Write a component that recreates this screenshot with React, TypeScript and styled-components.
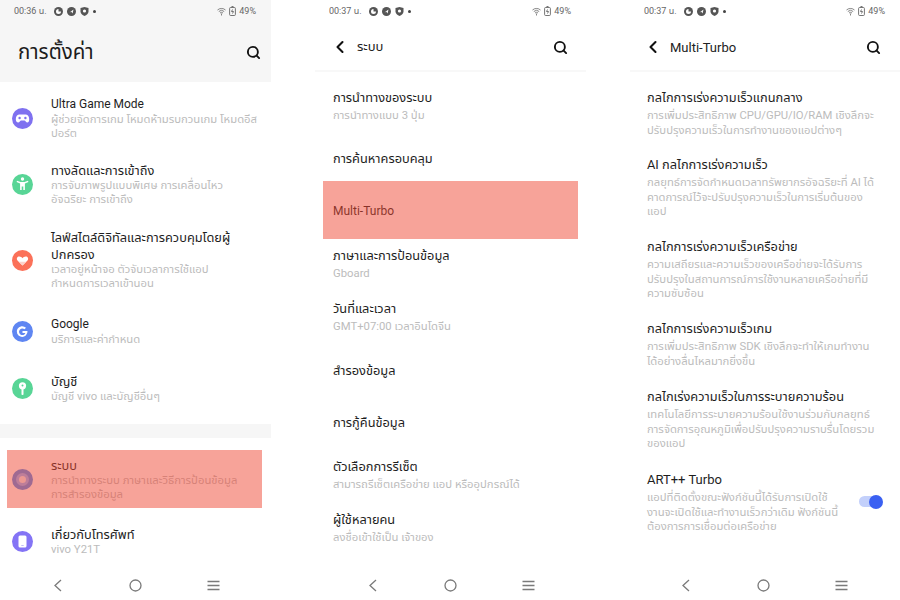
import * as React from 'react';
import styled, { createGlobalStyle } from 'styled-components';
import { ChevronLeft, Search } from 'lucide-react';

const GlobalStyle = createGlobalStyle`
    html, body {
        margin: 0;
        background: #fff;
        font-family: Roboto, "Noto Sans", "Noto Sans Thai", "DejaVu Sans", sans-serif;
    }
`;

const Page = styled.div`
    display: grid;
    grid-template-columns: 271px 271px 270px;
    column-gap: 44px;
    width: 900px;
    height: 600px;
    overflow: hidden;
`;

const Phone = styled.div`
    position: relative;
    height: 600px;
    display: flex;
    flex-direction: column;
`;

const Top = styled.div`
    background: #f6f6f6;
    height: 82px;
    flex: none;
`;

const Status = styled.div`
    display: flex;
    align-items: center;
    height: 22px;
    padding: 0 15px 0 14px;
    color: #666;
    font-size: 9px;
`;

const StatusIcons = styled.div`
    display: flex;
    align-items: center;
    gap: 4px;
    margin-left: 7px;
    flex: 1;
`;

const StatusRight = styled.div`
    display: flex;
    align-items: center;
    gap: 3px;
`;

const BigTitle = styled.div`
    display: flex;
    align-items: center;
    justify-content: space-between;
    height: 30px;
    margin-top: 15px;
    padding: 0 10px 0 18px;
    font-size: 20.5px;
    color: #1c1c1c;
`;

const SubHeader = styled.div<{ $left: number; $right: number }>`
    display: flex;
    align-items: center;
    height: 46px;
    padding: 2px ${p => p.$right}px 0 ${p => p.$left}px;
    border-bottom: 2px solid #f8f8f8;
    font-size: 13px;
    color: #222;
    flex: none;
`;

const HeaderText = styled.span`
    margin-left: 7px;
    flex: 1;
`;

const Band = styled.div<{ $gap: number }>`
    background: #f6f6f6;
    height: 14px;
    margin-top: ${p => p.$gap}px;
    flex: none;
`;

const Row = styled.div<{ $gap: number; $left: number }>`
    display: flex;
    align-items: center;
    margin-top: ${p => p.$gap}px;
    padding-left: ${p => p.$left}px;
    padding-right: 14px;
    flex: none;
`;

const IconCell = styled.div`
    width: 21px;
    height: 21px;
    flex: none;
    margin-right: 18px;
`;

const Texts = styled.div`
    flex: 1;
    min-width: 0;
`;

const Title = styled.div<{ $size: number; $line: number }>`
    font-size: ${p => p.$size}px;
    line-height: ${p => p.$line}px;
    color: #1e1e1e;
    white-space: pre;
`;

const Sub = styled.div`
    font-size: 11.3px;
    line-height: 14.5px;
    color: #bcbcbc;
    white-space: pre;
`;

const Toggle = styled.div`
    position: relative;
    width: 22px;
    height: 11px;
    border-radius: 6px;
    background: #c3d0fb;
    flex: none;
    margin-right: 5px;
    &::after {
        content: '';
        position: absolute;
        right: -2px;
        top: -1.5px;
        width: 14px;
        height: 14px;
        border-radius: 50%;
        background: #3a60f2;
    }
`;

const Highlight = styled.div<{ $x: number; $y: number }>`
    position: absolute;
    left: ${p => p.$x}px;
    top: ${p => p.$y}px;
    width: 255px;
    height: 58px;
    background: rgba(239, 71, 51, 0.5);
`;

const Nav = styled.div<{ $left: number }>`
    position: absolute;
    left: 0;
    right: 0;
    top: 576px;
    height: 18px;
    display: grid;
    grid-template-columns: 78px 77px 78px;
    padding-left: ${p => p.$left}px;
    justify-items: center;
    align-items: center;
`;

const StatusBar: React.FC<{ time: string }> = ({ time }) => (
    <Status>
        <span>{time}</span>
        <StatusIcons>
            <svg width="9" height="9" viewBox="0 0 9 9"><circle cx="4.5" cy="4.5" r="4.5" fill="#555" /><path d="M4.5 2a2.5 2.5 0 1 0 2.5 2.5H4.5z" fill="#fff" /></svg>
            <svg width="9" height="9" viewBox="0 0 9 9"><circle cx="4.5" cy="4.5" r="4.5" fill="#555" /><path d="M2.5 5.5 6.5 2.5 5.5 6.5 4.4 4.8z" fill="#fff" /></svg>
            <svg width="9" height="9" viewBox="0 0 9 9"><path d="M.5 1 4.5 0l4 1v3.500c0 2-2 3.700-4 4.500-2-.8-4-2.500-4-4.500z" fill="#555" /><circle cx="4.5" cy="4" r="1.600" fill="#fff" /></svg>
            <svg width="3" height="3" viewBox="0 0 3 3"><circle cx="1.5" cy="1.5" r="1.5" fill="#444" /></svg>
        </StatusIcons>
        <StatusRight>
            <svg width="9" height="9" viewBox="0 0 9 9" fill="none" stroke="#666" strokeWidth=".8"><path d="M.5 3a6 6 0 0 1 8 0M1.800 4.500a4 4 0 0 1 5.400 0M3 6a2.200 2.200 0 0 1 3 0" /><path d="M4.500 6.500v2" /></svg>
            <svg width="7" height="10" viewBox="0 0 7 10" fill="none" stroke="#666" strokeWidth=".9"><rect x=".6" y="1.5" width="5.800" height="8" rx="1" /><path d="M2.500.5h2M3.500 3.500 2.500 5.500h2L3.500 7.500" /></svg>
            <span>49%</span>
        </StatusRight>
    </Status>
);

const Dot: React.FC<{ color: string; children: React.ReactNode }> = ({ color, children }) => (
    <svg width="21" height="21" viewBox="0 0 21 21">
        <circle cx="10.5" cy="10.5" r="10.5" fill={color} />
        {children}
    </svg>
);

const icons: Record<string, React.ReactNode> = {
    game: (
        <Dot color="#7f71f0">
            <path d="M7 6.500h7c2 0 3.200 2.500 3.200 4.800 0 2.200-.8 3.200-1.800 3.200-1.500 0-2-2-3-2H9.100c-1 0-1.500 2-3 2-1 0-2.300-1-2.300-3.200 0-2.300 1.200-4.800 3.200-4.800z" fill="#fff" />
            <circle cx="7.600" cy="10" r="1.200" fill="#7f71f0" />
            <circle cx="13.400" cy="10" r="1.200" fill="#7f71f0" />
        </Dot>
    ),
    access: (
        <Dot color="#58d596">
            <circle cx="10.5" cy="5" r="1.700" fill="#fff" />
            <path d="M5 6.800 8.500 8h4L16 6.800l.4 1.300-3.500 1.400V16h-1.600v-3.500h-1.600V16H8.100V9.500L4.600 8.100z" fill="#fff" />
        </Dot>
    ),
    heart: (
        <Dot color="#fb7159">
            <path d="M10.500 15.500 5.500 10.500c-1.500-1.800-.2-4 1.800-4 1.300 0 2.500.8 3.200 1.800.7-1 1.900-1.800 3.200-1.800 2 0 3.300 2.200 1.800 4z" fill="#fff" />
            <path d="M10.500 15.500 6.800 11.800h7.400z" fill="#fcd2ca" />
        </Dot>
    ),
    google: (
        <Dot color="#5f86f2">
            <path d="M15.500 10h-5v2h2.900a3.300 3.300 0 1 1-.9-3.700l1.500-1.500a5.400 5.400 0 1 0 1.500 3.200z" fill="#fff" />
        </Dot>
    ),
    key: (
        <Dot color="#58d596">
            <circle cx="10.5" cy="7.800" r="3.600" fill="#fff" />
            <rect x="9.500" y="10" width="2" height="7" rx=".8" fill="#fff" />
            <circle cx="10.5" cy="7.500" r="1" fill="#58d596" />
        </Dot>
    ),
    system: (
        <Dot color="#4f8cf0">
            <circle cx="10.5" cy="10.5" r="6.500" fill="#8cb4ff" />
            <circle cx="10.5" cy="10.5" r="3.500" fill="#e8e8f0" />
        </Dot>
    ),
    phone: (
        <Dot color="#8474f5">
            <rect x="6.500" y="4.500" width="8" height="12" rx="1.500" fill="#fff" />
            <rect x="9.300" y="14" width="2.400" height=".8" fill="#b5adf6" />
        </Dot>
    ),
};

const NavIcons = () => (
    <>
        <svg width="10" height="13" viewBox="0 0 10 13" fill="none" stroke="#7a7a7a" strokeWidth="1.3"><path d="M8 1 2 6.500 8 12" /></svg>
        <svg width="13" height="13" viewBox="0 0 13 13" fill="none" stroke="#7a7a7a" strokeWidth="1.3"><circle cx="6.5" cy="6.5" r="5.5" /></svg>
        <svg width="13" height="11" viewBox="0 0 13 11" fill="none" stroke="#7a7a7a" strokeWidth="1.3"><path d="M.5 1.500h12M.5 5.500h12M.5 9.500h12" /></svg>
    </>
);

type Item = { title?: string; sub?: string; icon?: string; gap: number; band?: boolean; size?: number };

const settings: Item[] = [
    { icon: 'game', gap: 13.5, size: 12, title: 'Ultra Game Mode', sub: 'ผู้ช่วยจัดการเกม โหมดห้ามรบกวนเกม โหมดอีส\nปอร์ต' },
    { icon: 'access', gap: 20, title: 'ทางลัดและการเข้าถึง', sub: 'การจับภาพรูปแบบพิเศษ การเคลื่อนไหว\nอัจฉริยะ การเข้าถึง' },
    { icon: 'heart', gap: 21, title: 'ไลฟ์สไตล์ดิจิทัลและการควบคุมโดยผู้\nปกครอง', sub: 'เวลาอยู่หน้าจอ ตัวจับเวลาการใช้แอป\nกำหนดการเวลาเข้านอน' },
    { icon: 'google', gap: 24.5, size: 12, title: 'Google', sub: 'บริการและค่ากำหนด' },
    { icon: 'key', gap: 25.5, title: 'บัญชี', sub: 'บัญชี vivo และบัญชีอื่นๆ' },
    { band: true, gap: 19 },
    { icon: 'system', gap: 19, title: 'ระบบ', sub: 'การนำทางระบบ ภาษาและวิธีการป้อนข้อมูล\nการสำรองข้อมูล' },
    { icon: 'phone', gap: 23.5, title: 'เกี่ยวกับโทรศัพท์', sub: 'vivo Y21T' },
];

const system: Item[] = [
    { gap: 15, title: 'การนำทางของระบบ', sub: 'การนำทางแบบ 3 ปุ่ม' },
    { gap: 24, title: 'การค้นหาครอบคลุม' },
    { gap: 30.5, size: 12, title: 'Multi-Turbo' },
    { gap: 22.5, title: 'ภาษาและการป้อนข้อมูล', sub: 'Gboard' },
    { gap: 16.5, title: 'วันที่และเวลา', sub: 'GMT+07:00 เวลาอินโดจีน' },
    { gap: 25.5, title: 'สำรองข้อมูล' },
    { gap: 30, title: 'การกู้คืนข้อมูล' },
    { gap: 22, title: 'ตัวเลือกการรีเซ็ต', sub: 'สามารถรีเซ็ตเครือข่าย แอป หรืออุปกรณ์ได้' },
    { gap: 16.5, title: 'ผู้ใช้หลายคน', sub: 'ลงชื่อเข้าใช้เป็น เจ้าของ' },
];

const turbo: Item[] = [
    { gap: 15, title: 'กลไกการเร่งความเร็วแกนกลาง', sub: 'การเพิ่มประสิทธิภาพ CPU/GPU/IO/RAM เชิงลึกจะ\nปรับปรุงความเร็วในการทำงานของแอปต่างๆ' },
    { gap: 16, title: 'AI กลไกการเร่งความเร็ว', sub: 'กลยุทธ์การจัดกำหนดเวลาทรัพยากรอัจฉริยะที่ AI ได้\nคาดการณ์ไว้จะปรับปรุงความเร็วในการเริ่มต้นของ\nแอป' },
    { gap: 16.5, title: 'กลไกการเร่งความเร็วเครือข่าย', sub: 'ความเสถียรและความเร็วของเครือข่ายจะได้รับการ\nปรับปรุงในสถานการณ์การใช้งานหลายเครือข่ายที่มี\nความซับซ้อน' },
    { gap: 16.5, title: 'กลไกการเร่งความเร็วเกม', sub: 'การเพิ่มประสิทธิภาพ SDK เชิงลึกจะทำให้เกมทำงาน\nได้อย่างลื่นไหลมากยิ่งขึ้น' },
    { gap: 17, title: 'กลไกเร่งความเร็วในการระบายความร้อน', sub: 'เทคโนโลยีการระบายความร้อนใช้งานร่วมกับกลยุทธ์\nการจัดการอุณหภูมิเพื่อปรับปรุงความราบรื่นโดยรวม\nของแอป' },
    { gap: 17.5, size: 13, title: 'ART++ Turbo', sub: 'แอปที่ติดตั้งขณะฟังก์ชันนี้ได้รับการเปิดใช้\nงานจะเปิดใช้และทำงานเร็วกว่าเดิม ฟังก์ชันนี้\nต้องการการเชื่อมต่อเครือข่าย' },
];

const List: React.FC<{ items: Item[]; left: number; line: number; toggleLast?: boolean }> = ({ items, left, line, toggleLast }) => (
    <>
        {items.map((item, i) =>
            item.band ? (
                <Band key={i} $gap={item.gap} />
            ) : (
                <Row key={i} $gap={item.gap} $left={left}>
                    {item.icon && <IconCell>{icons[item.icon]}</IconCell>}
                    <Texts>
                        <Title $size={item.size ?? 12.8} $line={line}>{item.title}</Title>
                        {item.sub && <Sub>{item.sub}</Sub>}
                    </Texts>
                    {toggleLast && i === items.length - 1 && <Toggle />}
                </Row>
            )
        )}
    </>
);

const SubPage: React.FC<{ time: string; title: string; left: number; right: number; children: React.ReactNode }> = ({ time, title, left, right, children }) => (
    <Phone>
        <StatusBar time={time} />
        <SubHeader $left={left} $right={right}>
            <ChevronLeft size={20} strokeWidth={2.5} color="#111" />
            <HeaderText>{title}</HeaderText>
            <Search size={15} strokeWidth={3} color="#111" />
        </SubHeader>
        {children}
    </Phone>
);

const App: React.FC = () => (
    <Page>
        <GlobalStyle />
        <Phone>
            <Top>
                <StatusBar time="00:36 น." />
                <BigTitle>
                    <span>การตั้งค่า</span>
                    <Search size={15} strokeWidth={3} color="#111" />
                </BigTitle>
            </Top>
            <List items={settings} left={12} line={17} />
            <Highlight $x={7} $y={450} />
            <Nav $left={19}><NavIcons /></Nav>
        </Phone>
        <SubPage time="00:37 น." title="ระบบ" left={15} right={18}>
            <List items={system} left={18} line={22} />
            <Highlight $x={8} $y={181} />
            <Nav $left={19}><NavIcons /></Nav>
        </SubPage>
        <SubPage time="00:37 น." title="Multi-Turbo" left={13} right={19}>
            <List items={turbo} left={17} line={22} toggleLast />
            <Nav $left={17}><NavIcons /></Nav>
        </SubPage>
    </Page>
);

export default App;
